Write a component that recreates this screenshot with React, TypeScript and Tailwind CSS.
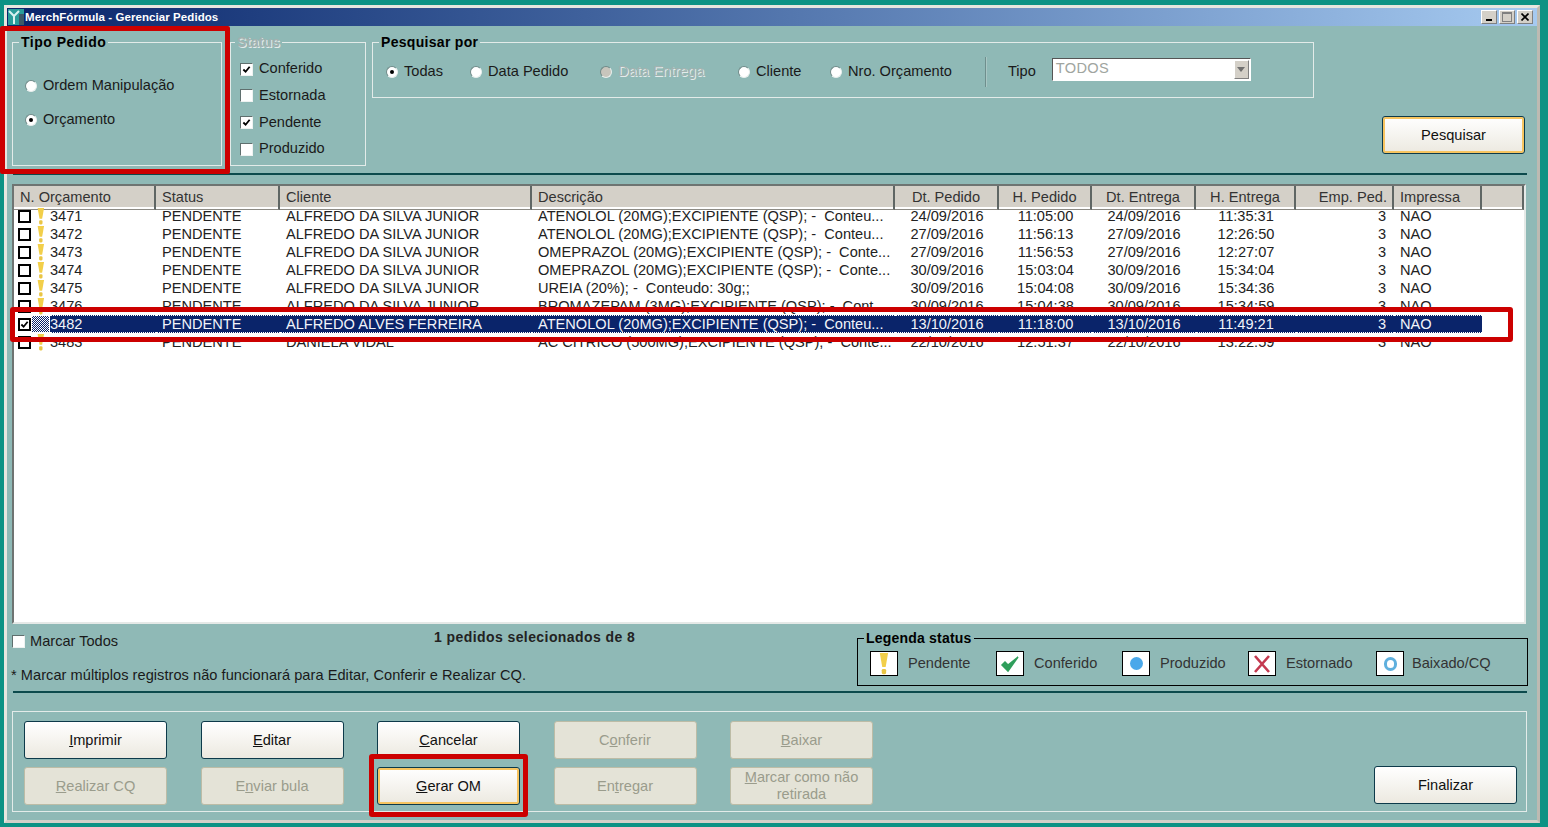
const ROWS = [
	["3471", "ALFREDO DA SILVA JUNIOR", "ATENOLOL (20MG);EXCIPIENTE (QSP); -  Conteu...", "24/09/2016", "11:05:00", "24/09/2016", "11:35:31"],
	["3472", "ALFREDO DA SILVA JUNIOR", "ATENOLOL (20MG);EXCIPIENTE (QSP); -  Conteu...", "27/09/2016", "11:56:13", "27/09/2016", "12:26:50"],
	["3473", "ALFREDO DA SILVA JUNIOR", "OMEPRAZOL (20MG);EXCIPIENTE (QSP); -  Conte...", "27/09/2016", "11:56:53", "27/09/2016", "12:27:07"],
	["3474", "ALFREDO DA SILVA JUNIOR", "OMEPRAZOL (20MG);EXCIPIENTE (QSP); -  Conte...", "30/09/2016", "15:03:04", "30/09/2016", "15:34:04"],
	["3475", "ALFREDO DA SILVA JUNIOR", "UREIA (20%); -  Conteudo: 30g;;", "30/09/2016", "15:04:08", "30/09/2016", "15:34:36"],
	["3476", "ALFREDO DA SILVA JUNIOR", "BROMAZEPAM (3MG);EXCIPIENTE (QSP); -  Cont...", "30/09/2016", "15:04:38", "30/09/2016", "15:34:59"],
	["3482", "ALFREDO ALVES FERREIRA", "ATENOLOL (20MG);EXCIPIENTE (QSP); -  Conteu...", "13/10/2016", "11:18:00", "13/10/2016", "11:49:21"],
	["3483", "DANIELA VIDAL", "AC CITRICO (500MG);EXCIPIENTE (QSP); -  Conte...", "22/10/2016", "12:51:37", "22/10/2016", "13:22:59"],
];

const COLS = "grid grid-cols-[142px_124px_252px_363px_104px_93px_104px_100px_98px_88px_1fr]";

function Radio({ checked, disabled }: { checked?: boolean; disabled?: boolean }) {
	return (
		<span
			className={`flex h-[12px] w-[12px] shrink-0 items-center justify-center rounded-full border border-[#6f8a88] border-r-[#e8efed] border-b-[#e8efed] ${disabled ? "bg-[#c8c5bc]" : "bg-white"}`}
		>
			{checked && <span className="h-[4px] w-[4px] rounded-full bg-black" />}
		</span>
	);
}

function Check({ checked, heavy }: { checked?: boolean; heavy?: boolean }) {
	return (
		<span
			className={`flex h-[13px] w-[13px] shrink-0 items-center justify-center bg-white ${heavy ? "border-2 border-black" : "border border-[#5f6f6e] border-r-[#eef2f1] border-b-[#eef2f1]"}`}
		>
			{checked && (
				<svg viewBox="0 0 10 10" className="h-[9px] w-[9px]">
					<path d="M1.5 5 L4 7.5 L8.5 2" fill="none" stroke="#000" strokeWidth="2" />
				</svg>
			)}
		</span>
	);
}

function Bang({ size = 14 }: { size?: number }) {
	return (
		<svg viewBox="0 0 8 18" width={size * 0.45} height={size} className="shrink-0">
			<path d="M0.6 0 H7.4 L5.4 11.5 H2.6 Z" fill="#f2cf4a" />
			<rect x="2.2" y="13" width="3.6" height="4.4" rx="1.2" fill="#e9c544" />
		</svg>
	);
}

function Btn({ label, mn, disabled, focus }: { label: string; mn?: string; disabled?: boolean; focus?: boolean }) {
	const i = mn ? label.indexOf(mn) : -1;
	return (
		<button
			className={`flex h-[38px] w-[143px] items-center justify-center rounded-[3px] border px-[8px] text-center text-[14.6px] leading-[17px] ${
				disabled
					? "border-[#bcbca6] bg-[#e4e3d7] text-[#9a9c8c]"
					: "border-[#0d3a4a] bg-gradient-to-b from-white to-[#ece9e0] text-[#111]"
			} ${focus ? "shadow-[inset_0_0_0_2px_#f7c460]" : ""}`}
		>
			<span>
				{i >= 0 ? (
					<>
						{label.slice(0, i)}
						<u>{mn}</u>
						{label.slice(i + 1)}
					</>
				) : (
					label
				)}
			</span>
		</button>
	);
}

function LegendItem({ label, w, children }: { label: string; w: string; children: React.ReactNode }) {
	return (
		<div className={`flex items-center ${w}`}>
			<span className="flex h-[25px] w-[28px] shrink-0 items-center justify-center border border-black bg-white">
				{children}
			</span>
			<span className="ml-[10px]">{label}</span>
		</div>
	);
}

export default function App() {
	return (
		<div className="relative h-[827px] w-[1548px] overflow-hidden bg-[#0d9284] pt-[5px] pl-[4px] font-['Liberation_Sans',Arial,sans-serif] text-[14.6px] text-[#1a1a1a]">
			<div className="flex h-[818px] w-[1536px] flex-col border-[3px] border-[#d4d0c8] border-t-[#e8e6df] border-l-[#e8e6df] border-r-[#bdbab2] bg-[#8fb9b6]">
				{/* title bar */}
				<div className="flex h-[18px] shrink-0 items-center bg-gradient-to-r from-[#0a246a] to-[#a6caf0] pr-[4px]">
					<svg viewBox="0 0 16 16" className="ml-[1px] h-[16px] w-[16px] shrink-0">
						<rect width="16" height="16" fill="#2a9d9a" />
						<path d="M1 2 L6 7 L11 2 M6 7 V15" stroke="#d8f2f0" strokeWidth="2" fill="none" />
						<rect x="11" y="5" width="5" height="11" fill="#3c5a68" />
					</svg>
					<span className="ml-[1px] pt-[1px] text-[11.5px] font-bold tracking-[0.07px] text-white">MerchFórmula - Gerenciar Pedidos</span>
					<div className="ml-auto flex gap-[2px]">
						<span className="flex h-[14px] w-[16px] items-end justify-center border border-[#808080] border-t-white border-l-white bg-[#d4d0c8] pb-[2px]">
							<span className="h-[2px] w-[6px] bg-black" />
						</span>
						<span className="flex h-[14px] w-[16px] items-center justify-center border border-[#808080] border-t-white border-l-white bg-[#d4d0c8]">
							<span className="h-[10px] w-[10px] border border-[#808080] border-t-2" />
						</span>
						<span className="flex h-[14px] w-[16px] items-center justify-center border border-[#808080] border-t-white border-l-white bg-[#d4d0c8]">
							<svg viewBox="0 0 8 8" className="h-[8px] w-[8px]">
								<path d="M0.5 0.5 L7.5 7.5 M7.5 0.5 L0.5 7.5" stroke="#000" strokeWidth="1.6" />
							</svg>
						</span>
					</div>
				</div>

				{/* filters */}
				<div className="flex h-[147px] shrink-0 items-start pt-[8px] pl-[5px]">
					<fieldset className="h-[132px] w-[210px] shrink-0 border border-[#e3ebe9]">
						<legend className="ml-[6px] px-[2px] text-[14px] leading-[16px] font-bold tracking-[0.5px] text-black">Tipo Pedido</legend>
						<div className="flex flex-col gap-[16px] pt-[27px] pl-[12px]">
							<label className="flex h-[18px] items-center gap-[6px]"><Radio />Ordem Manipulação</label>
							<label className="flex h-[18px] items-center gap-[6px]"><Radio checked />Orçamento</label>
						</div>
					</fieldset>
					<fieldset className="ml-[8px] h-[132px] w-[136px] shrink-0 border border-[#e3ebe9]">
						<legend className="ml-[4px] px-[2px] text-[14px] leading-[16px] font-bold text-[#a3b2b0] [text-shadow:1px_1px_0_#e4eceb]">Status</legend>
						<div className="flex flex-col pt-[6px] pl-[9px]">
							<label className="flex h-[26.6px] items-center gap-[6px]"><Check checked />Conferido</label>
							<label className="flex h-[26.6px] items-center gap-[6px]"><Check />Estornada</label>
							<label className="flex h-[26.6px] items-center gap-[6px]"><Check checked />Pendente</label>
							<label className="flex h-[26.6px] items-center gap-[6px]"><Check />Produzido</label>
						</div>
					</fieldset>
					<fieldset className="ml-[6px] h-[64px] w-[942px] shrink-0 border border-[#e3ebe9]">
						<legend className="ml-[6px] px-[2px] text-[14px] leading-[16px] font-bold tracking-[0.3px] text-black">Pesquisar por</legend>
						<div className="flex items-center pt-[7px] pl-[13px]">
							<label className="flex h-[28px] w-[84px] items-center gap-[6px]"><Radio checked />Todas</label>
							<label className="flex h-[28px] w-[130px] items-center gap-[6px]"><Radio />Data Pedido</label>
							<label className="flex h-[28px] w-[138px] items-center gap-[6px] text-[#a3b2b0] [text-shadow:1px_1px_0_#e4eceb]"><Radio disabled />Data Entrega</label>
							<label className="flex h-[28px] w-[92px] items-center gap-[6px]"><Radio />Cliente</label>
							<label className="flex h-[28px] w-[155px] items-center gap-[6px]"><Radio />Nro. Orçamento</label>
							<span className="h-[30px] w-[2px] border-r border-l border-r-[#a9c7c4] border-l-[#6f8f8d]" />
							<span className="ml-[21px]">Tipo</span>
							<div className="mb-[6px] ml-[16px] flex h-[23px] w-[199px] items-center border border-[#555] border-r-white border-b-white bg-white pr-[1px] pl-[3px] text-[#a0a5a0]">
								<span className="tracking-[0.3px]">TODOS</span>
								<span className="ml-auto flex h-[19px] w-[15px] items-center justify-center border border-[#808080] border-t-white border-l-white bg-[#d4d0c8]">
									<span className="h-0 w-0 border-x-[4px] border-t-[5px] border-x-transparent border-t-[#707070]" />
								</span>
							</div>
						</div>
					</fieldset>
					<div className="mt-[82px] ml-[68px]">
						<Btn label="Pesquisar" focus />
					</div>
				</div>

				<div className="mr-[10px] ml-[6px] h-[2px] shrink-0 bg-[#0c4a4c]" />

				{/* list */}
				<div className="mt-[9px] ml-[5px] flex h-[440px] w-[1514px] shrink-0 flex-col overflow-hidden border-2 border-[#6e7472] border-r-[#e5e9e7] border-b-[#e5e9e7] bg-white text-[#222]">
					<div className={`${COLS} h-[21px] shrink-0 bg-[#d4d0c8] text-[#333]`}>
						{[
							["N. Orçamento", "pl-[6px]"],
							["Status", "pl-[6px]"],
							["Cliente", "pl-[6px]"],
							["Descrição", "pl-[6px]"],
							["Dt. Pedido", "justify-center"],
							["H. Pedido", "justify-center"],
							["Dt. Entrega", "justify-center"],
							["H. Entrega", "justify-center"],
							["Emp. Ped.", "justify-end pr-[5px]"],
							["Impressa", "pl-[6px]"],
							["", ""],
						].map(([t, c], i) => (
							<div key={i} className={`flex items-center border-r-2 border-b border-r-[#5f6664] border-b-[#8c8a84] pt-[1px] ${c}`}>
								{t}
							</div>
						))}
					</div>
					{ROWS.map((r) => {
						const sel = r[0] === "3482";
						const cell = sel ? "border-y border-dotted border-white bg-[#0a246a] leading-[16px] text-[#f2f4fa]" : "";
						return (
							<div key={r[0]} className={`${COLS} h-[18px] shrink-0 leading-[18px] whitespace-pre`}>
								<div className="flex h-[18px] items-center">
									<span className="ml-[4px]"><Check heavy checked={sel} /></span>
									<span className="relative flex h-[18px] w-[19px] items-center justify-center">
										{sel ? (
											<span className="h-[16px] w-[17px] bg-[repeating-conic-gradient(#0a246a_0%_25%,#ffffff_0%_50%)] bg-[length:2px_2px]" />
										) : (
											<Bang size={17} />
										)}
									</span>
									<span className={`flex h-[18px] flex-1 items-center ${cell}`}>{r[0]}</span>
								</div>
								<div className={`pl-[6px] ${cell}`}>PENDENTE</div>
								<div className={`pl-[6px] ${cell}`}>{r[1]}</div>
								<div className={`pl-[6px] ${cell}`}>{r[2]}</div>
								<div className={`text-center ${cell}`}>{r[3]}</div>
								<div className={`text-center ${cell}`}>{r[4]}</div>
								<div className={`text-center ${cell}`}>{r[5]}</div>
								<div className={`text-center ${cell}`}>{r[6]}</div>
								<div className={`pr-[8px] text-right ${cell}`}>3</div>
								<div className={`pl-[6px] ${cell}`}>NAO</div>
								<div />
							</div>
						);
					})}
				</div>

				{/* totals + legend */}
				<div className="flex h-[67px] shrink-0 pt-[1px] pl-[5px]">
					<div className="w-[845px] shrink-0">
						<div className="flex h-[27px] items-center">
							<span className="flex w-[415px] items-center gap-[5px] pt-[6px]"><Check />Marcar Todos</span>
							<span className="ml-[7px] pb-[3px] text-[14px] font-bold tracking-[0.42px] text-[#222]">1 pedidos selecionados de 8</span>
						</div>
						<div className="mt-[13px] -ml-[1px] tracking-[0.04px]">* Marcar múltiplos registros não funcionará para Editar, Conferir e Realizar CQ.</div>
					</div>
					<fieldset className="mt-[5px] h-[56px] w-[671px] shrink-0 border border-black">
						<legend className="ml-[6px] px-[2px] text-[14px] leading-[16px] font-bold tracking-[0.2px] text-black">Legenda status</legend>
						<div className="flex items-center pt-[5px] pl-[12px] text-[#333]">
							<LegendItem label="Pendente" w="w-[126px]"><Bang size={22} /></LegendItem>
							<LegendItem label="Conferido" w="w-[126px]">
								<svg viewBox="0 0 20 20" className="h-[20px] w-[22px]">
									<path d="M2 11 L8 17 L18 3 L8 11 L5 8 Z" fill="#2f9e5b" stroke="#2f9e5b" strokeWidth="1.5" />
								</svg>
							</LegendItem>
							<LegendItem label="Produzido" w="w-[126px]"><span className="h-[13px] w-[13px] rounded-full bg-[#4aa8ea]" /></LegendItem>
							<LegendItem label="Estornado" w="w-[128px]">
								<svg viewBox="0 0 20 20" className="h-[20px] w-[20px]">
									<path d="M3 2 L17 18 M17 2 L3 18" stroke="#c43a50" strokeWidth="2.6" />
								</svg>
							</LegendItem>
							<div className="flex items-center">
								<span className="flex h-[25px] w-[28px] shrink-0 items-center justify-center border border-black bg-white">
									<span className="h-[14px] w-[13px] rounded-full border-[3px] border-[#5fb0de]" />
								</span>
								<span className="ml-[8px]">Baixado/CQ</span>
							</div>
						</div>
					</fieldset>
				</div>

				<div className="mr-[10px] ml-[6px] h-[2px] shrink-0 bg-[#0c4a4c]" />

				{/* actions */}
				<div className="mt-[18px] ml-[5px] flex h-[101px] w-[1515px] shrink-0 items-start border border-[#e3ebe9] pt-[9px] pl-[11px]">
					<div className="grid grid-cols-[143px_143px_143px_143px_143px] gap-x-[33.5px] gap-y-[8px]">
						<Btn label="Imprimir" mn="I" />
						<Btn label="Editar" mn="E" />
						<Btn label="Cancelar" mn="C" />
						<Btn label="Conferir" mn="o" disabled />
						<Btn label="Baixar" mn="B" disabled />
						<Btn label="Realizar CQ" mn="R" disabled />
						<Btn label="Enviar bula" mn="n" disabled />
						<Btn label="Gerar OM" mn="G" focus />
						<Btn label="Entregar" mn="t" disabled />
						<Btn label="Marcar como não retirada" mn="M" disabled />
					</div>
					<div className="mt-[45px] mr-[9px] ml-auto">
						<Btn label="Finalizar" />
					</div>
				</div>
			</div>

			{/* red annotation boxes drawn over the screenshot */}
			<div className="absolute top-[26px] left-[0px] h-[148px] w-[230px] rounded-[2px] border-[5px] border-[#cc0000]" />
			<div className="absolute top-[307px] left-[10px] h-[35px] w-[1503px] rounded-[3px] border-[5px] border-[#cc0000]" />
			<div className="absolute top-[754px] left-[369px] h-[63px] w-[159px] rounded-[3px] border-[5px] border-[#cc0000]" />
		</div>
	);
}
